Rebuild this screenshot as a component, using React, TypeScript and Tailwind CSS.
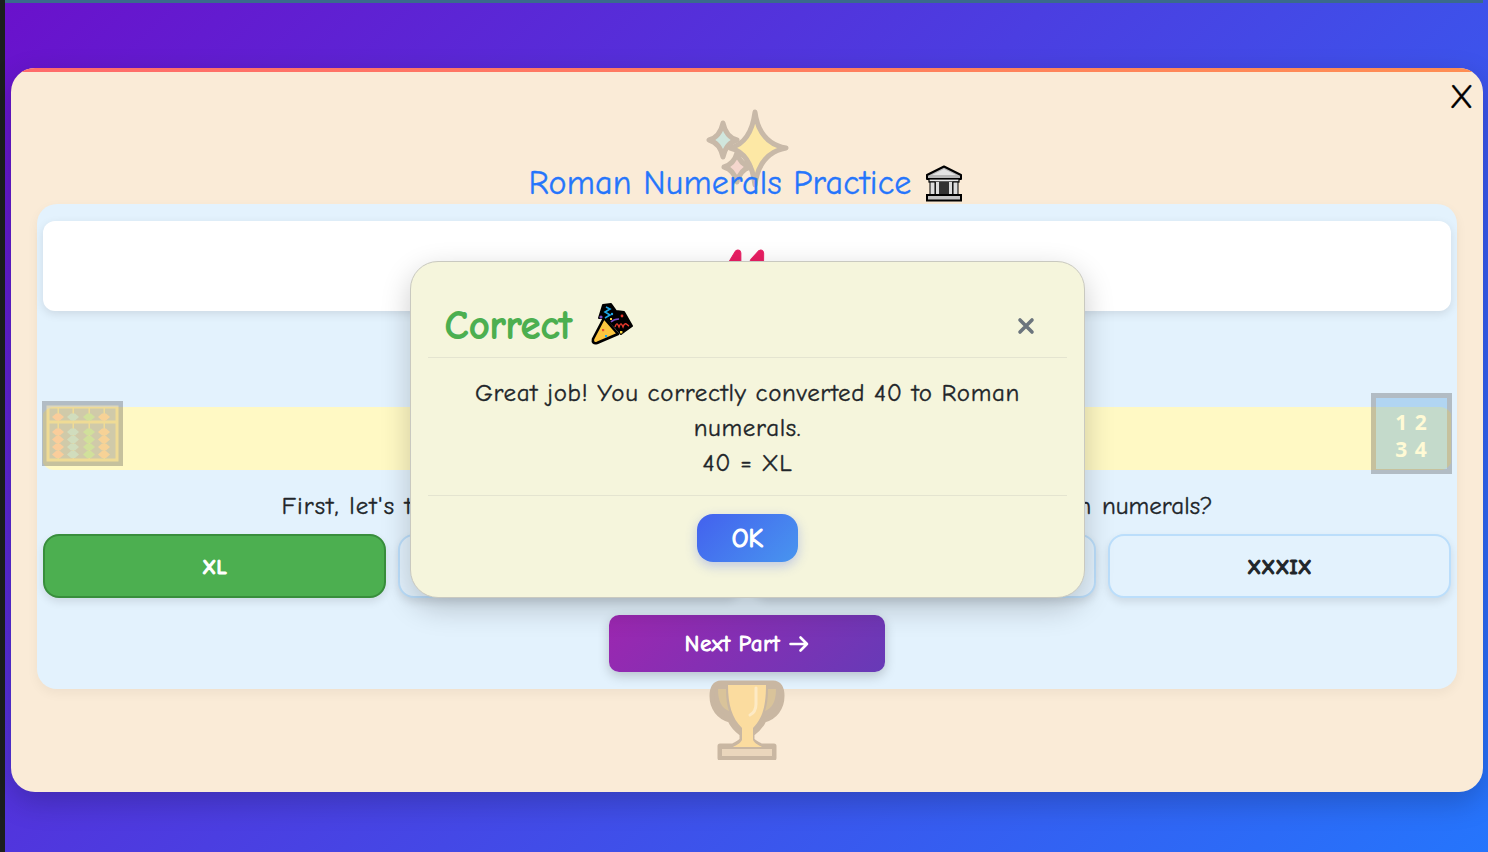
const comic = "font-['Comic_Sans_MS','Comic_Neue','Comic_Relief',cursive]";
const thick = "[-webkit-text-stroke:0.35px_currentColor]";
const heavy = "[-webkit-text-stroke:0.9px_currentColor]";

const Sparkles = () => (
  <svg viewBox="0 0 84 80" className="h-[80px] w-[84px]">
    <g strokeLinejoin="round" stroke="#c8b9a8" strokeWidth="5">
      <path d="M49 3 Q53 34 80 39 Q53 44 49 76 Q45 44 24 39 Q45 34 49 3Z" fill="#fde8a5" />
      <path d="M17 14 Q20 28 31 31 Q20 34 17 48 Q14 34 3 31 Q14 28 17 14Z" fill="#d0e6dd" />
      <path d="M31 44 Q34 55 44 58 Q34 61 31 73 Q28 61 18 58 Q28 55 31 44Z" fill="#f5d6cd" />
    </g>
  </svg>
);

const Abacus = () => {
  const cols = [
    ["#f06a40", 16],
    ["#6aa0b0", 31],
    ["#69a840", 47],
    ["#e87a30", 62],
  ] as const;
  return (
    <svg viewBox="0 0 81 65" className="h-[65px] w-[81px] opacity-30">
      <rect width="81" height="65" fill="#444" />
      <rect x="6" y="6" width="69" height="53" fill="#66606e" stroke="#cd992b" strokeWidth="3" />
      <rect x="6" y="19.5" width="69" height="3" fill="#cd992b" />
      {cols.map(([color, x]) => (
        <g key={x}>
          <rect x={x - 0.5} y="6" width="1.5" height="53" fill="#cd992b" />
          <path d={`M${x - 6} 16 L${x - 2} 12.5 H${x + 2} L${x + 6} 16 L${x + 2} 19.5 H${x - 2}Z`} fill={color} />
          {[31, 38.5, 46, 53.5].map((y) => (
            <path key={y} d={`M${x - 6} ${y} L${x - 2} ${y - 3.5} H${x + 2} L${x + 6} ${y} L${x + 2} ${y + 3.5} H${x - 2}Z`} fill={color} />
          ))}
        </g>
      ))}
    </svg>
  );
};

const InputNumbers = () => (
  <div className="h-[81px] w-[81px] border-[5px] border-[#444] bg-[#3f96dc] pt-[11px] text-center font-['Noto_Sans',sans-serif] text-[21px] font-bold leading-[27px] tracking-[1px] text-white opacity-30">
    <div>1 2</div>
    <div>3 4</div>
  </div>
);

const Trophy = () => (
  <svg viewBox="0 0 76 80" className="h-[80px] w-[76px]">
    <path d="M12 3 H64 C70 3 73 8 73 16 C73 28 66 37 55 40 C52 47 47 51 43 54 V60 C45 63 49 64 52 66 H65 V78 H11 V66 H24 C27 64 31 63 33 60 V54 C29 51 24 47 21 40 C10 37 3 28 3 16 C3 8 6 3 12 3Z" fill="#c9b7a2" stroke="#c9b7a2" strokeWidth="5" strokeLinejoin="round" />
    <path d="M9 9 H17 C17 18 18 25 20 31 C13 28 9 22 9 9Z" fill="#d9c39a" />
    <path d="M67 9 H59 C59 18 58 25 56 31 C63 28 67 22 67 9Z" fill="#d9c39a" />
    <path d="M19 5 H57 C57 25 54 38 44 48 V60 C46 64 50 65 53 67 H24 C27 65 31 64 33 60 V48 C23 38 19 25 19 5Z" fill="#fbdc9f" />
    <path d="M13 69 H63 V76 H13Z" fill="#ead6bc" />
    <path d="M47 8 V24 C47 30 45 33 41 35" fill="none" stroke="#fdeac5" strokeWidth="3" strokeLinecap="round" />
  </svg>
);

const Building = () => (
  <svg viewBox="0 0 38 37" className="h-[37px] w-[38px] shrink-0">
    <path d="M19 1.5 L36 10 V14 H2 V10Z" fill="#b8b8b8" stroke="#000" strokeWidth="2" strokeLinejoin="round" />
    <path d="M19 4 L31 10 H7Z" fill="#e4e4e4" />
    <rect x="4" y="14" width="30" height="3" fill="#e8e8e8" stroke="#000" strokeWidth="1.2" />
    <rect x="10" y="17" width="18" height="13" fill="#333" />
    <rect x="5" y="17" width="5" height="13" fill="#dcdcdc" stroke="#000" strokeWidth="1" />
    <rect x="28" y="17" width="5" height="13" fill="#dcdcdc" stroke="#000" strokeWidth="1" />
    <rect x="11" y="17" width="3" height="13" fill="#dcdcdc" />
    <rect x="24" y="17" width="3" height="13" fill="#dcdcdc" />
    <rect x="2" y="30" width="34" height="5.5" fill="#c4c4c4" stroke="#000" strokeWidth="2" />
  </svg>
);

const Popper = () => (
  <svg viewBox="0 0 42 42" className="h-[42px] w-[42px] shrink-0">
    <path d="M12 2 L20 1 L25 8 L33 9 L41 23 L34 28 L30 31 L25 25 L15 15 L8 15Z" fill="#000" stroke="#000" strokeWidth="2" strokeLinejoin="round" />
    <path d="M13 15 L27 31 L6 40 Q1 41 2 36Z" fill="#fcc63f" stroke="#000" strokeWidth="2.6" strokeLinejoin="round" />
    <path d="M15 4 L19 6 L14 9 L19 12 L14 15" fill="none" stroke="#1ea7e8" strokeWidth="1.6" />
    <path d="M24 24 C26 18 27 22 28 24 C30 18 31 22 32 24 C34 18 36 22 38 23" fill="none" stroke="#e8392c" strokeWidth="1.4" />
    <path d="M20 19 Q23 16 28 16" fill="none" stroke="#7a4fc9" strokeWidth="1.5" />
    <rect x="11" y="26" width="2.2" height="2.2" fill="#e8502c" />
    <rect x="14" y="32" width="2.2" height="2.2" fill="#1ea7e8" />
    <circle cx="31" cy="13" r="1.4" fill="#e8392c" />
    <circle cx="10" cy="14" r="1.6" fill="#7a4fc9" />
    <circle cx="21" cy="11" r="1.2" fill="#1ea7e8" />
    <rect x="19" y="15" width="2" height="2" fill="#fcd63f" />
    <rect x="29" y="28" width="2.4" height="2.4" fill="#fcd63f" />
  </svg>
);

const options = ["XL", "XXXX", "XLI", "XXXIX"];

const GameCard = () => (
  <div className="relative ml-[6px] mt-[65px] h-[724px] overflow-hidden rounded-[24px] bg-[#faebd7] shadow-[0_10px_30px_rgba(0,0,0,0.2)]">
    <div className="h-1 bg-[linear-gradient(90deg,#ff6b6b,#ff8e53)]" />
    <button className={`${thick} absolute right-[10px] top-[7px] text-[34px] leading-[44px] text-black`}>X</button>

    <div className="-mb-[26px] mt-[37px] flex justify-center pl-[2px]">
      <Sparkles />
    </div>

    <h1 className={`${thick} relative flex h-[41px] items-center justify-center gap-[13px] pr-[3px] text-[34px] tracking-[0.2px] text-[#2575fc]`}>
      <span className="pb-[1px]">Roman Numerals Practice</span>
      <Building />
    </h1>

    <div className="relative z-10 mx-[26px] h-[485px] rounded-[20px] bg-[#e3f2fd] px-[6px] pt-[17px] shadow-[0_4px_12px_rgba(0,0,0,0.05)]">
      <div className={`${heavy} flex h-[90px] justify-center overflow-hidden rounded-[12px] bg-white pr-[6px] text-[64px] font-bold leading-[80px] text-[#e91e63] shadow-[0_3px_10px_rgba(0,0,0,0.1)]`}>
        <span className="pt-[11px]">41</span>
      </div>

      <div className="-mx-px mt-[96px] flex h-[63px] items-center justify-between rounded-[12px] bg-[linear-gradient(#fff9c4,#fff9c4)] bg-[length:calc(100%-2px)_100%] bg-center bg-no-repeat pb-[10px]">
        <Abacus />
        <InputNumbers />
      </div>

      <p className={`${thick} mt-[20px] text-center text-[25px] leading-[32px] tracking-[1.12px]`}>
        First, let's try a simple one: What is the number 40 written in Roman <span className="tracking-normal">numerals?</span>
      </p>

      <div className="mt-[12px] grid grid-cols-4 gap-[12px]">
        {options.map((label, i) => (
          <button
            key={label}
            className={
              i === 0
                ? `${heavy} h-[64px] rounded-[16px] border-2 border-[#388e3c] bg-[#4caf50] pt-[3px] text-[20px] font-bold text-white shadow-[0_4px_8px_rgba(0,0,0,0.1)]`
                : `${heavy} h-[64px] rounded-[16px] border-2 border-[#bbdefb] bg-[#e3f2fd] pt-[3px] text-[20px] font-bold text-[#212529] shadow-[0_4px_8px_rgba(0,0,0,0.1)]`
            }
          >
            {label}
          </button>
        ))}
      </div>

      <div className="mt-[17px] flex justify-center">
        <button className="flex h-[57px] w-[276px] items-center justify-center gap-[9px] rounded-[10px] bg-[linear-gradient(135deg,#9c27b0,#673ab7)] text-white shadow-[0_4px_12px_rgba(0,0,0,0.2)]">
          <span className="pt-[2px] text-[22px] tracking-[0.9px] [-webkit-text-stroke:1.1px_currentColor]">Next Part</span>
          <svg viewBox="0 0 20 20" className="h-[20px] w-[20px]" fill="none" stroke="white" strokeWidth="2.6" strokeLinecap="round" strokeLinejoin="round">
            <path d="M1.5 10 H18 M11.5 3.5 L18 10 L11.5 16.5" />
          </svg>
        </button>
      </div>
    </div>

    <div className="relative z-20 -mt-[9px] flex justify-center">
      <Trophy />
    </div>
  </div>
);

const CorrectDialog = () => (
  <div className="absolute inset-0 z-30 flex items-center justify-center pl-[7px] pt-[7px]">
    <div className="h-[337px] w-[675px] rounded-[28px] border border-[#c9c9c0] bg-[#f5f5dc] px-[17px] shadow-[0_10px_30px_rgba(0,0,0,0.2)]">
      <div className="flex h-[96px] items-end justify-between border-b border-[#e4e4d0] px-[17px] pb-[6px]">
        <div className="flex items-center gap-[19px] text-[#4caf50]">
          <span className="pt-[5px] text-[38px] leading-[50px] tracking-[0.8px] [-webkit-text-stroke:2px_currentColor]">Correct</span>
          <Popper />
        </div>
        <svg viewBox="0 0 18 18" className="mb-[16px] mr-[15px] h-[18px] w-[18px]" fill="none" stroke="#6c757d" strokeWidth="3.6" strokeLinecap="round">
          <path d="M3 3 L15 15 M15 3 L3 15" />
        </svg>
      </div>
      <div className={`${thick} h-[138px] border-b border-[#e4e4d0] px-[30px] pt-[17px] text-center text-[25px] leading-[35px] tracking-[0.65px]`}>
        Great job! You correctly converted 40 to Roman numerals.
        <br />
        40 = XL
      </div>
      <div className="flex justify-center pt-[18px]">
        <button className="h-[48px] w-[101px] rounded-[16px] bg-[linear-gradient(135deg,#4361ee,#4895ef)] pt-[3px] text-[26px] text-white shadow-[0_4px_12px_rgba(67,97,238,0.3)] [-webkit-text-stroke:1.2px_currentColor]">
          OK
        </button>
      </div>
    </div>
  </div>
);

export default function App() {
  return (
    <div className={`${comic} relative flex h-[852px] overflow-hidden bg-[linear-gradient(135deg,#6a11cb,#2575fc)] text-[#212529]`}>
      <div className="w-[5px] bg-[#1b1f1e]" />
      <main className="min-w-0 flex-1 pr-[5px]">
        <div className="h-[3px] bg-[#3a6a8c]" />
        <GameCard />
      </main>
      <CorrectDialog />
    </div>
  );
}
